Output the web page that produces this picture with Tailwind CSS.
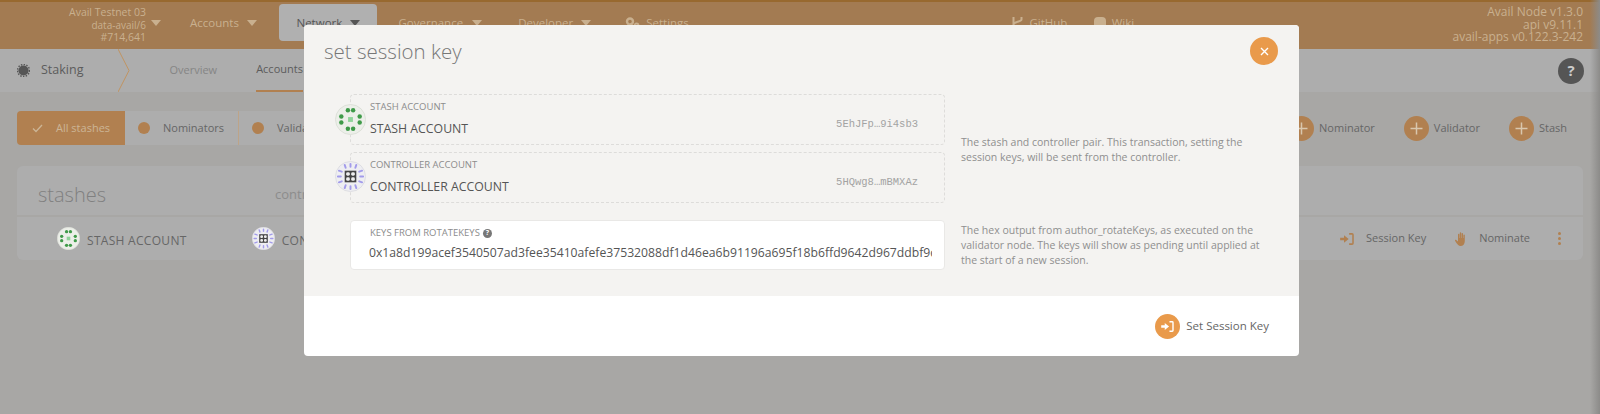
<!DOCTYPE html>
<html lang="en">
<head>
  <meta charset="UTF-8">
  <title>set session key</title>
  <script src="https://cdn.jsdelivr.net/npm/@tailwindcss/browser@4"></script>
</head>
<body class="relative w-[1600px] h-[414px] overflow-hidden bg-[#a8a7a5] font-['Open_Sans',sans-serif] text-[#666]">
  <svg class="hidden">
    <symbol id="stash-id" viewBox="0 0 32 32">
      <circle cx="16" cy="16" r="15.5" fill="#ecefe9" stroke="#dcdfd8"/>
      <g fill="#3f9a49">
        <circle cx="13.300" cy="6.500" r="2.300"/><circle cx="18.700" cy="6.500" r="2.300"/>
        <circle cx="13.300" cy="25.500" r="2.300"/><circle cx="18.700" cy="25.500" r="2.300"/>
        <circle cx="6.500" cy="13" r="2.300"/><circle cx="6.500" cy="19" r="2.300"/>
        <circle cx="25.500" cy="13" r="2.300"/><circle cx="25.500" cy="19" r="2.300"/>
      </g>
      <rect x="13.500" y="13.500" width="5" height="5" fill="#8fd49a"/>
    </symbol>
    <symbol id="controller-id" viewBox="0 0 32 32">
      <circle cx="16" cy="16" r="15.500" fill="#eeeef2" stroke="#dddde2"/>
      <g stroke="#a29bea" stroke-width="2" stroke-linecap="round">
        <path d="M16 3v3M10 4l1 3M22 4l-1 3M4 10l3 1M28 10l-3 1M3 16h3M29 16h-3M4 22l3-1M28 22l-3-1M10 28l1-3M22 28l-1-3M16 29v-3"/>
      </g>
      <rect x="10" y="10" width="12" height="12" fill="#444"/>
      <g fill="#eee">
        <rect x="11.500" y="11.500" width="3.800" height="3.800" rx="1.500"/><rect x="16.700" y="11.500" width="3.800" height="3.800" rx="1.500"/>
        <rect x="11.500" y="16.700" width="3.800" height="3.800" rx="1.500"/><rect x="16.700" y="16.700" width="3.800" height="3.800" rx="1.500"/>
      </g>
    </symbol>
    <symbol id="sign-in" viewBox="0 0 16 14">
      <path fill="currentColor" d="M0 5.500h4.500V2.600L10 7l-5.500 4.400V8.500H0z"/>
      <path fill="none" stroke="currentColor" stroke-width="1.800" d="M10.500 1H14a1 1 0 0 1 1 1v10a1 1 0 0 1-1 1h-3.500"/>
    </symbol>
    <symbol id="caret" viewBox="0 0 10 6">
      <path fill="currentColor" d="M0 0h10L5 6z"/>
    </symbol>
    <symbol id="plus" viewBox="0 0 25 25">
      <path d="M12.500 6.500v12M6.500 12.500h12" stroke="currentColor" stroke-width="1.500"/>
    </symbol>
  </svg>

  <!-- nav -->
  <header class="h-[49px] pb-[6px] border-t-2 border-[#98692f] bg-[#a37b52] flex items-center text-[11.500px] text-[#c9b08f]">
    <div class="w-[146px] mt-[5px] text-right leading-[12.500px] shrink-0">
      <div class="text-[10.500px]">Avail Testnet 03</div>
      <div class="text-[10px]">data-avail/6</div>
      <div class="text-[10.500px]">#714,641</div>
    </div>
    <svg class="w-[10px] h-[6px] ml-[5px] shrink-0"><use href="#caret"/></svg>
    <span class="ml-[29px]">Accounts</span>
    <svg class="w-[10px] h-[6px] ml-[8px] shrink-0"><use href="#caret"/></svg>
    <div class="ml-[21.600px] w-[98px] h-[37px] rounded bg-[#b0b0b0] flex items-center pl-[18px] gap-[8px] text-[#555] shrink-0">
      <span>Network</span><svg class="w-[10px] h-[6px]"><use href="#caret"/></svg>
    </div>
    <span class="ml-[22px]">Governance</span>
    <svg class="ml-[8.500px] w-[10px] h-[6px] shrink-0"><use href="#caret"/></svg>
    <span class="ml-[36.500px]">Developer</span>
    <svg class="ml-[8px] w-[10px] h-[6px] shrink-0"><use href="#caret"/></svg>
    <svg class="ml-[34px] w-[15px] h-[12px] shrink-0" viewBox="0 0 15 12"><circle cx="5" cy="4.500" r="3" fill="none" stroke="currentColor" stroke-width="2.400"/><circle cx="11.500" cy="8.500" r="2" fill="none" stroke="currentColor" stroke-width="1.800"/></svg>
    <span class="ml-[6px]">Settings</span>
    <svg class="ml-[322.600px] w-[13px] h-[13px] shrink-0" viewBox="0 0 13 13"><path d="M2.500 1v11M10.500 1v2.500c0 2.500-8 2-8 5" fill="none" stroke="currentColor" stroke-width="2"/></svg>
    <span class="ml-[5px]">GitHub</span>
    <span class="ml-[26.300px] w-[12px] h-[12px] rounded-sm bg-[#c9b08f] shrink-0"></span>
    <span class="ml-[6px]">Wiki</span>
    <div class="ml-auto mr-[17px] mt-[5px] text-right text-[12px] leading-[12.500px]">
      <div>Avail Node v1.3.0</div><div>api v9.11.1</div><div>avail-apps v0.122.3-242</div>
    </div>
  </header>

  <!-- tabs -->
  <nav class="h-[43px] bg-[#adadad] flex items-center text-[11px]">
    <svg class="ml-[17px] w-[13px] h-[13px]" viewBox="0 0 14 14"><circle cx="7" cy="7" r="5.500" fill="#555"/><circle cx="7" cy="7" r="6.500" fill="none" stroke="#555" stroke-dasharray="1.500 1.500" stroke-width="1.500"/></svg>
    <span class="ml-[11px] text-[12.500px] text-[#5c5c5c]">Staking</span>
    <svg class="ml-[35px] w-[12px] h-[43px] shrink-0" viewBox="0 0 12 43"><path d="M0 0l11 21.500L0 43" fill="none" stroke="#c09462"/></svg>
    <span class="ml-[39px] text-[#858585]">Overview</span>
    <span class="ml-[39px] h-full flex items-center border-b-2 border-[#b18050] text-[#5c5c5c]">Accounts</span>
    <div class="ml-auto mr-[16px] w-[26px] h-[26px] rounded-full bg-[#555] text-[#ccc] text-[15px] font-bold flex items-center justify-center">?</div>
  </nav>

  <main class="px-[17px]">
    <!-- filters and add buttons -->
    <div class="mt-[19px] h-[34px] flex items-center text-[11px]">
      <div class="w-[108px] h-full rounded-l bg-[#b18050] flex items-center pl-[15px] gap-[13px] text-[#ccb596]">
        <svg class="w-[11px] h-[9px]" viewBox="0 0 11 9"><path d="M1 4.500l3 3 6-6.500" fill="none" stroke="currentColor" stroke-width="1.300"/></svg>
        <span>All stashes</span>
      </div>
      <div class="w-[114px] h-full bg-[#adadad] border-r border-[#bda488] flex items-center pl-[13px] gap-[13px]">
        <span class="w-[12px] h-[12px] rounded-full bg-[#b18050]"></span><span>Nominators</span>
      </div>
      <div class="w-[120px] h-full bg-[#adadad] flex items-center pl-[13px] gap-[13px]">
        <span class="w-[12px] h-[12px] rounded-full bg-[#b18050]"></span><span>Validators</span>
      </div>
      <div class="ml-auto flex items-center pr-[16px]">
        <svg class="w-[25px] h-[25px] rounded-full bg-[#b18050] text-[#d9c7ae]"><use href="#plus"/></svg>
        <span class="ml-[5px]">Nominator</span>
        <svg class="ml-[29px] w-[25px] h-[25px] rounded-full bg-[#b18050] text-[#d9c7ae]"><use href="#plus"/></svg>
        <span class="ml-[5px]">Validator</span>
        <svg class="ml-[29px] w-[25px] h-[25px] rounded-full bg-[#b18050] text-[#d9c7ae]"><use href="#plus"/></svg>
        <span class="ml-[5px]">Stash</span>
      </div>
    </div>

    <!-- stashes table -->
    <div class="mt-[21px] h-[49px] w-[1566px] rounded-t-md bg-[#adadad] flex items-center pt-[9px] pl-[21px]">
      <span class="text-[20px] font-light text-[#808080]">stashes</span>
      <span class="ml-[169px] text-[13px] text-[#8c8c8c]">controller</span>
    </div>
    <div class="mt-[2px] h-[43px] w-[1566px] rounded-b-md bg-[#adadad] flex items-center text-[11px]">
      <svg class="ml-[40px] w-[23px] h-[23px]"><use href="#stash-id"/></svg>
      <span class="ml-[7px] mt-[5px] text-[12px] tracking-[0.3px]">STASH ACCOUNT</span>
      <svg class="ml-[65px] w-[23px] h-[23px]"><use href="#controller-id"/></svg>
      <span class="ml-[7px] mt-[5px] text-[12px] tracking-[0.3px]">CONTROLLER ACCOUNT</span>
      <svg class="ml-auto w-[14px] h-[12px] text-[#b18050]"><use href="#sign-in"/></svg>
      <span class="ml-[12px]">Session Key</span>
      <svg class="ml-[29px] w-[12px] h-[14px]" viewBox="0 0 12 14"><path fill="#b18050" d="M3 2.500a.7.7 0 0 1 1.400 0V6h.4V1a.7.7 0 0 1 1.400 0v5h.4V1.800a.7.7 0 0 1 1.400 0V6h.4V3.300a.7.7 0 0 1 1.400 0V9c0 3-1.700 5-4.300 5C3.500 14 2.500 12.500 0 8.800c-.4-.6.600-1.400 1.200-.8L3 9.500z"/></svg>
      <span class="ml-[12px]">Nominate</span>
      <span class="ml-[28px] mr-[22px] w-[3px] flex flex-col gap-[2px]">
        <i class="w-[3px] h-[3px] rounded-full bg-[#b18050]"></i><i class="w-[3px] h-[3px] rounded-full bg-[#b18050]"></i><i class="w-[3px] h-[3px] rounded-full bg-[#b18050]"></i>
      </span>
    </div>
  </main>

  <div class="absolute inset-y-0 right-0 w-[10px] bg-gradient-to-r from-transparent to-[#8c8b89]"></div>

  <!-- modal -->
  <section class="absolute left-[304px] top-[25px] w-[995px] h-[331px] rounded bg-white overflow-hidden flex flex-col">
    <div class="relative h-[271px] bg-[#f4f3f1]">
      <h1 class="pl-[20px] pt-[12px] text-[20.500px] leading-[29px] font-light text-[#777]">set session key</h1>
      <button class="absolute left-[946px] top-[12px] w-[28px] h-[28px] rounded-full bg-[#e99a4b] text-white flex items-center justify-center">
        <svg class="w-[9px] h-[9px]" viewBox="0 0 9 9"><path d="M1 1l7 7M8 1L1 8" stroke="currentColor" stroke-width="1.400"/></svg>
      </button>

      <div class="mt-[28px] pl-[46px] grid grid-cols-[595px_330px] gap-x-[16px] gap-y-[17px]">
        <div class="flex flex-col gap-[7px]">
          <div class="relative h-[51px] border border-dashed border-[#dddcda] rounded">
            <svg class="absolute left-[-16px] top-[9px] w-[31px] h-[31px]"><use href="#stash-id"/></svg>
            <div class="pl-[19px] pt-[5px] text-[9.500px] leading-[14px] text-[#8c8c8c]">STASH ACCOUNT</div>
            <div class="pl-[19px] pt-[5px] text-[12.300px] leading-[20px] text-[#555]">STASH ACCOUNT</div>
            <div class="absolute right-[26px] top-[22px] font-['Liberation_Mono',monospace] text-[10.500px] text-[#a3a3a3]">5EhJFp…9i4sb3</div>
          </div>
          <div class="relative h-[51px] border border-dashed border-[#dddcda] rounded">
            <svg class="absolute left-[-16px] top-[8px] w-[31px] h-[31px]"><use href="#controller-id"/></svg>
            <div class="pl-[19px] pt-[5px] text-[9.500px] leading-[14px] text-[#8c8c8c]">CONTROLLER ACCOUNT</div>
            <div class="pl-[19px] pt-[5px] text-[12.300px] leading-[20px] text-[#555]">CONTROLLER ACCOUNT</div>
            <div class="absolute right-[26px] top-[22px] font-['Liberation_Mono',monospace] text-[10.500px] text-[#a3a3a3]">5HQwg8…mBMXAz</div>
          </div>
        </div>
        <p class="w-[300px] pt-[41px] text-[10.500px] leading-[15px] text-[#8f8f8f]">The stash and controller pair. This transaction, setting the session keys, will be sent from the controller.</p>

        <div class="h-[50px] rounded bg-white border border-[#e9e8e6]">
          <div class="pl-[19px] pt-[5px] flex items-center gap-[3px] text-[9.500px] leading-[14px] text-[#8c8c8c]">KEYS FROM ROTATEKEYS
            <span class="w-[9px] h-[9px] rounded-full bg-[#777] text-white text-[7px] font-bold flex items-center justify-center">?</span>
          </div>
          <div class="ml-[18px] w-[563px] overflow-hidden whitespace-nowrap pt-[3px] text-[12.200px] leading-[20px] text-[#555]">0x1a8d199acef3540507ad3fee35410afefe37532088df1d46ea6b91196a695f18b6ffd9642d967ddbf9c8a1e</div>
        </div>
        <p class="w-[310px] pt-[3px] text-[10.500px] leading-[15px] text-[#8f8f8f]">The hex output from author_rotateKeys, as executed on the validator node. The keys will show as pending until applied at the start of a new session.</p>
      </div>
    </div>
    <div class="flex-1 flex items-center justify-end pr-[30px] text-[11.500px] text-[#666]">
      <span class="w-[25px] h-[25px] rounded-full bg-[#e99a4b] text-white flex items-center justify-center">
        <svg class="w-[13px] h-[11px]"><use href="#sign-in"/></svg>
      </span>
      <span class="ml-[6px]">Set Session Key</span>
    </div>
  </section>
</body>
</html>
